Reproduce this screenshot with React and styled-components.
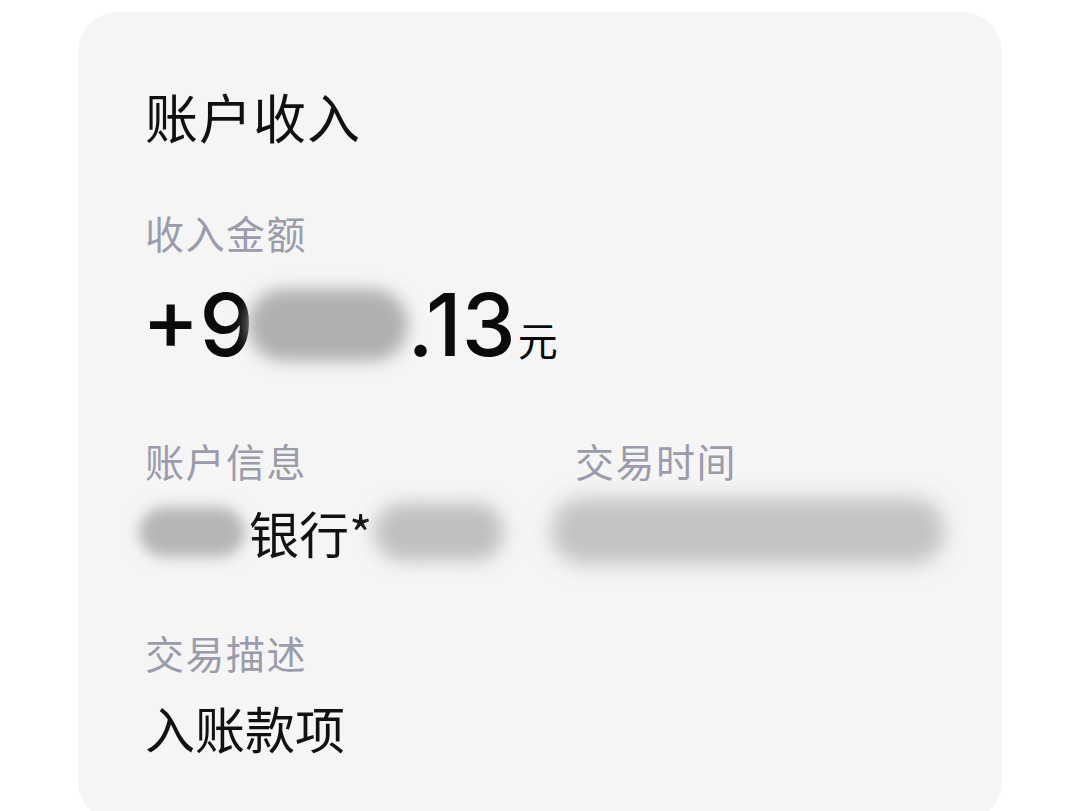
import React from "react";
import styled, { createGlobalStyle } from "styled-components";

const Global = createGlobalStyle`
  body {
    margin: 0;
    background: #ffffff;
    font-family: "Noto Sans CJK SC", "Noto Sans", sans-serif;
  }
`;

const Page = styled.div`
  width: 1080px;
  height: 811px;
  overflow: hidden;
  padding: 12px 78px 0 78px;
  box-sizing: border-box;
`;

const Card = styled.div`
  background: #f5f5f6;
  border-radius: 40px;
  height: 810px;
  padding: 78px 0 0 67px;
  box-sizing: border-box;
`;

const Title = styled.div`
  font-size: 53px;
  line-height: 1;
  color: #111;
  letter-spacing: 1px;
`;

const Label = styled.div`
  font-size: 39px;
  line-height: 1;
  color: #9b9cab;
  letter-spacing: 1.5px;
`;

const Field = styled.div`
  display: flex;
  flex-direction: column;
  gap: ${(p) => p.$gap || 24}px;
  margin-top: ${(p) => p.$top || 0}px;
`;

const Amount = styled.div`
  display: flex;
  align-items: baseline;
  font-family: Inter, "Noto Sans", sans-serif;
  font-weight: 500;
  font-size: 86px;
  line-height: 1;
  color: #0a0a0a;
  margin-left: -3px;
`;

const Unit = styled.span`
  font-family: "Noto Sans CJK SC", sans-serif;
  font-size: 40px;
  font-weight: 400;
  margin-left: 2px;
`;

const Blur = styled.span`
  display: inline-block;
  width: ${(p) => p.$w}px;
  height: ${(p) => p.$h}px;
  border-radius: ${(p) => p.$h / 2}px;
  background: ${(p) => p.$bg || "#b9b9bb"};
  filter: blur(${(p) => p.$blur || 7}px);
  vertical-align: middle;
`;

const Row = styled.div`
  display: flex;
  margin-top: 73px;
`;

const Col = styled.div`
  width: ${(p) => p.$w}px;
`;

const Value = styled.div`
  display: flex;
  align-items: center;
  font-size: 50px;
  line-height: 1;
  color: #111;
  height: ${(p) => p.$h || 50}px;
`;

export default function App() {
  return (
    <Page>
      <Global />
      <Card>
        <Title>账户收入</Title>
        <Field $top={70} $gap={30}>
          <Label>收入金额</Label>
          <Amount>
            +9
            <Blur $w={160} $h={72} $bg="#b0b0b2" $blur={8} style={{ alignSelf: "center", margin: "0 0 0 -6px" }} />
            .13
            <Unit>元</Unit>
          </Amount>
        </Field>
        <Row>
          <Col $w={430}>
            <Field $gap={26}>
              <Label>账户信息</Label>
              <Value $h={52}>
                <Blur $w={106} $h={50} $bg="#b6b6b8" $blur={7} style={{ marginLeft: -6, marginRight: 4 }} />
                银行*
                <Blur $w={130} $h={58} $bg="#c0c0c2" $blur={9} style={{ marginLeft: 2 }} />
              </Value>
            </Field>
          </Col>
          <Col $w={400}>
            <Field $gap={18}>
              <Label>交易时间</Label>
              <Value $h={66}>
                <Blur $w={394} $h={66} $bg="#c3c3c5" $blur={10} style={{ marginLeft: -24 }} />
              </Value>
            </Field>
          </Col>
        </Row>
        <Field $top={69} $gap={30}>
          <Label>交易描述</Label>
          <Value>入账款项</Value>
        </Field>
      </Card>
    </Page>
  );
}
